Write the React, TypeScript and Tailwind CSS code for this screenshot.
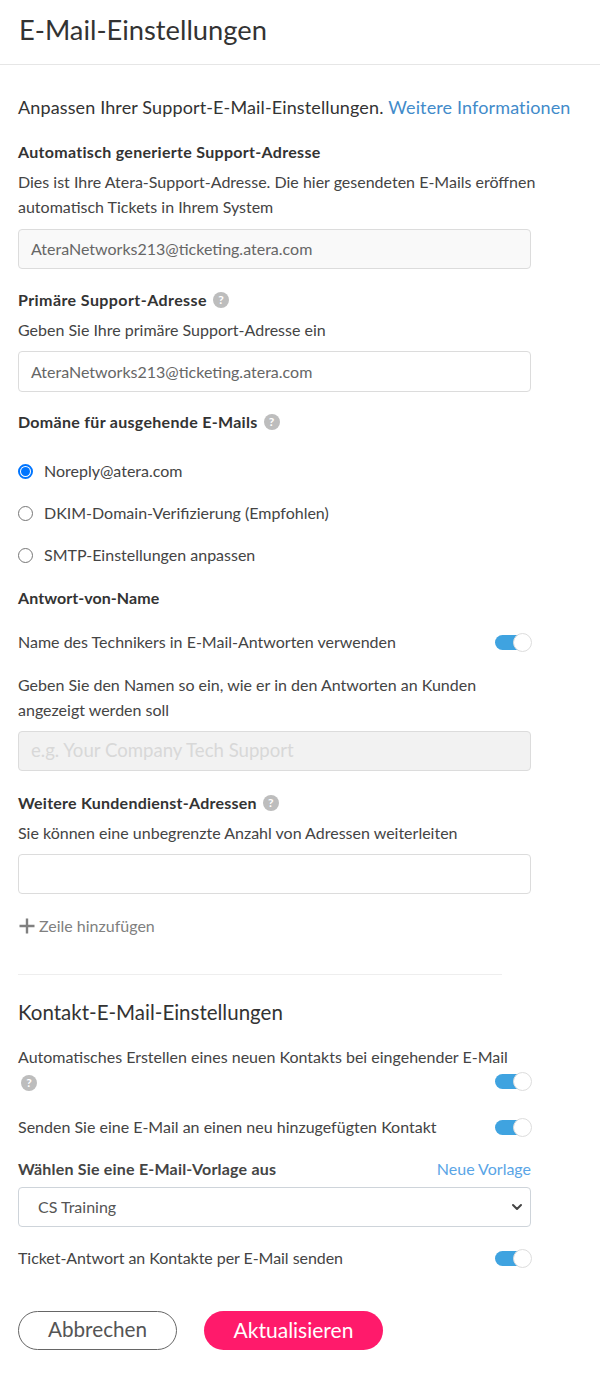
import React from 'react';
import { ChevronDown } from 'lucide-react';

function Help() {
  return (
    <span className="inline-flex h-4 w-4 shrink-0 items-center justify-center rounded-full bg-[#bdbdbd] text-[12px] font-bold leading-none tracking-normal text-white">
      ?
    </span>
  );
}

function Toggle() {
  return (
    <div className="relative h-[15px] w-[37px] shrink-0">
      <div className="h-[15px] w-[30px] rounded-full bg-[#3fa3e0]" />
      <div className="absolute right-0 top-[-2px] h-[19px] w-[19px] rounded-full border border-[#dddddd] bg-white" />
    </div>
  );
}

function Label({ children, help, className = 'tracking-[0.3px]' }: { children: React.ReactNode; help?: boolean; className?: string }) {
  return (
    <div className={`flex h-[24px] items-center gap-[6px] text-[16px] font-bold text-[#333333] ${className}`}>
      <span>{children}</span>
      {help && <Help />}
    </div>
  );
}

function Field({ value, placeholder, className = 'h-[40px] bg-white' }: { value?: string; placeholder?: string; className?: string }) {
  return (
    <div
      className={`flex w-[513px] items-center rounded-[4px] border border-[#dcdcdc] px-[12px] ${className} ${
        placeholder ? 'text-[18.6px] text-[#d8d8d8]' : 'text-[16px] text-[#666666]'
      }`}
    >
      {value || placeholder}
    </div>
  );
}

function Radio({ label, checked }: { label: string; checked?: boolean }) {
  return (
    <div className="flex h-[24px] items-center gap-[11px] text-[16px] text-[#444444]">
      {checked ? (
        <span className="flex h-[15px] w-[15px] items-center justify-center rounded-full border-[2px] border-[#0075ff]">
          <span className="h-[9px] w-[9px] rounded-full bg-[#0075ff]" />
        </span>
      ) : (
        <span className="h-[15px] w-[15px] rounded-full border border-[#767676]" />
      )}
      <span>{label}</span>
    </div>
  );
}

function ToggleRow({ label, className = '' }: { label: string; className?: string }) {
  return (
    <div className={`flex h-[24px] items-center justify-between text-[16px] text-[#444444] ${className}`}>
      <span>{label}</span>
      <Toggle />
    </div>
  );
}

export default function App() {
  return (
    <div className="h-[1384px] w-[600px] bg-white text-[#333333] [font-family:Lato,'Noto_Sans',sans-serif]">
      <div className="flex h-[65px] items-center border-b border-[#e6e6e6] px-[19px] pb-[4px] text-[27.3px] text-[#333333]">
        E-Mail-Einstellungen
      </div>

      <div className="pl-[18px] pr-[68px]">
        <div className="mt-[30px] flex h-[24px] w-[560px] items-center whitespace-nowrap text-[18px] tracking-[0.13px]">
          Anpassen Ihrer Support-E-Mail-Einstellungen.&nbsp;<span className="text-[#428bca]">Weitere Informationen</span>
        </div>

        <div className="mt-[21px]"><Label>Automatisch generierte Support-Adresse</Label></div>
        <p className="mt-[5px] w-[520px] text-[16px] leading-[25px] text-[#444444]">
          Dies ist Ihre Atera-Support-Adresse. Die hier gesendeten E-Mails eröffnen automatisch Tickets in Ihrem System
        </p>
        <div className="mt-[10px]"><Field value="AteraNetworks213@ticketing.atera.com" className="h-[40px] bg-[#f9f9f9]" /></div>

        <div className="mt-[19px]"><Label help className="tracking-[0.42px]">Primäre Support-Adresse</Label></div>
        <p className="mt-[5px] text-[16px] leading-[25px] text-[#444444]">Geben Sie Ihre primäre Support-Adresse ein</p>
        <div className="mt-[9px]"><Field value="AteraNetworks213@ticketing.atera.com" className="h-[41px] bg-white" /></div>

        <div className="mt-[18px]"><Label help>Domäne für ausgehende E-Mails</Label></div>

        <div className="mt-[25px] flex flex-col gap-[18px]">
          <Radio label="Noreply@atera.com" checked />
          <Radio label="DKIM-Domain-Verifizierung (Empfohlen)" />
          <Radio label="SMTP-Einstellungen anpassen" />
        </div>

        <div className="mt-[19px]"><Label className="tracking-[0.06px]">Antwort-von-Name</Label></div>
        <div className="mt-[20px]"><ToggleRow label="Name des Technikers in E-Mail-Antworten verwenden" /></div>
        <p className="mt-[18px] w-[520px] text-[16px] leading-[25px] text-[#444444]">
          Geben Sie den Namen so ein, wie er in den Antworten an Kunden angezeigt werden soll
        </p>
        <div className="mt-[9px]"><Field placeholder="e.g. Your Company Tech Support" className="h-[40px] bg-[#f2f2f2]" /></div>

        <div className="mt-[20px]"><Label help className="tracking-[0.24px]">Weitere Kundendienst-Adressen</Label></div>
        <p className="mt-[5px] text-[16px] leading-[25px] text-[#444444]">Sie können eine unbegrenzte Anzahl von Adressen weiterleiten</p>
        <div className="mt-[9px]"><Field /></div>

        <div className="mt-[20px] flex h-[24px] items-center gap-[3px] text-[16px] text-[#808080]">
          <svg width="18" height="18" viewBox="0 0 18 18" className="shrink-0">
            <path d="M9 1.5v15M1.5 9h15" stroke="#808080" strokeWidth="2.4" />
          </svg>
          <span>Zeile hinzufügen</span>
        </div>

        <div className="mt-[36px] h-px w-[484px] bg-[#eeeeee]" />

        <div className="mt-[24px] flex h-[26px] items-center text-[20.5px] text-[#333333]">Kontakt-E-Mail-Einstellungen</div>

        <div className="mt-[19px] flex items-end justify-between text-[16px] leading-[26px] text-[#444444]">
          <div className="w-[477px]">
            <div className="h-[26px] whitespace-nowrap">Automatisches Erstellen eines neuen Kontakts bei eingehender E-Mail</div>
            <div className="flex h-[26px] items-center pl-[3px]"><Help /></div>
          </div>
          <div className="mb-[7px]"><Toggle /></div>
        </div>

        <div className="mt-[19px]"><ToggleRow label="Senden Sie eine E-Mail an einen neu hinzugefügten Kontakt" /></div>

        <div className="mt-[18px] flex h-[24px] w-[513px] items-center justify-between">
          <span className="text-[16px] font-bold tracking-[0.2px] text-[#444444]">Wählen Sie eine E-Mail-Vorlage aus</span>
          <span className="text-[16px] text-[#5aa5e6]">Neue Vorlage</span>
        </div>

        <div className="mt-[6px] flex h-[40px] w-[513px] items-center justify-between rounded-[4px] border border-[#ced4da] pb-[1px] pl-[19px] pr-[5px] text-[16px] text-[#555555]">
          <span>CS Training</span>
          <ChevronDown size={16} strokeWidth={3} className="text-[#444444]" />
        </div>

        <div className="mt-[19px]"><ToggleRow label="Ticket-Antwort an Kontakte per E-Mail senden" className="tracking-[-0.05px]" /></div>

        <div className="mt-[41px] flex gap-[27px]">
          <div className="flex h-[39px] w-[159px] items-center justify-center rounded-full border border-[#666666] pb-[2px] text-[20.7px] text-[#555555]">
            Abbrechen
          </div>
          <div className="flex h-[39px] w-[179px] items-center justify-center rounded-full bg-[#ff1a6b] pb-[2px] text-[21px] text-white">
            Aktualisieren
          </div>
        </div>
      </div>
    </div>
  );
}
